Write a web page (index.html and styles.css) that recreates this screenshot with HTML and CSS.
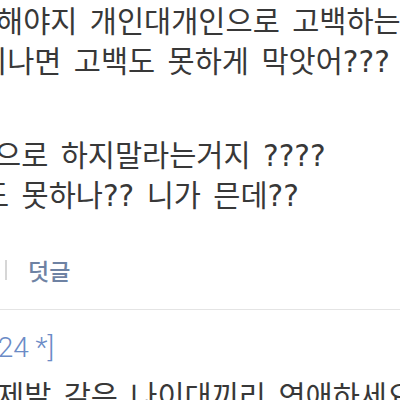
FILE: index.html
```html
<!DOCTYPE html>
<html lang="ko">
<head>
<meta charset="utf-8">
<link rel="stylesheet" href="styles.css">
</head>
<body>
<div class="page">
  <div class="comment">
    <div class="para">
      <div class="line l1">해야지 개인대개인으로 고백하는</div>
      <div class="line l2">지나면 고백도 못하게 막앗어???</div>
    </div>
    <div class="para second">
      <div class="line l3">으로 하지말라는거지 ????</div>
      <div class="line l4">도 못하나?? 니가 믄데??</div>
    </div>
    <div class="actions">
      <span class="sep"></span>
      <span class="reply">덧글</span>
    </div>
  </div>
  <div class="divider"></div>
  <div class="comment next">
    <div class="meta">[24 *]</div>
    <div class="line l5">제발 같은 나이대끼리 연애하세요</div>
  </div>
</div>
</body>
</html>
```
FILE: styles.css
```css
html, body {
  margin: 0;
  padding: 0;
  background: #ffffff;
  overflow: hidden;
}
.page {
  width: 400px;
  height: 400px;
  overflow: hidden;
  font-family: "Noto Sans CJK KR", "Noto Sans", sans-serif;
  color: #383838;
}
.comment {
  padding-top: 2px;
}
.line {
  font-family: "DejaVu Sans", "Noto Sans CJK KR", sans-serif;
  font-size: 29.5px;
  line-height: 40px;
  height: 40px;
  word-spacing: 3px;
  white-space: nowrap;
}
.l1 { text-indent: -4px; }
.l2 { text-indent: -20px; }
.l3 { text-indent: -6px; }
.l4 { text-indent: -18px; }
.l5 { text-indent: -3px; }
.second {
  margin-top: 54px;
}
.actions {
  display: flex;
  align-items: center;
  height: 24px;
  margin-top: 42px;
}
.sep {
  width: 2px;
  height: 20px;
  margin-left: 5px;
  margin-right: 21px;
  background: #d6d6d6;
}
.reply {
  font-size: 23px;
  line-height: 24px;
  color: #6e82a3;
  font-weight: 500;
}
.divider {
  height: 1px;
  background: #e4e4e4;
  margin-top: 27px;
}
.next {
  padding-top: 20px;
}
.meta {
  font-family: Roboto, "Liberation Sans", sans-serif;
  font-weight: 300;
  font-size: 28px;
  line-height: 36px;
  color: #6b8bc6;
  text-indent: -9px;
  white-space: nowrap;
}
.next .line {
  margin-top: 11px;
}
```
